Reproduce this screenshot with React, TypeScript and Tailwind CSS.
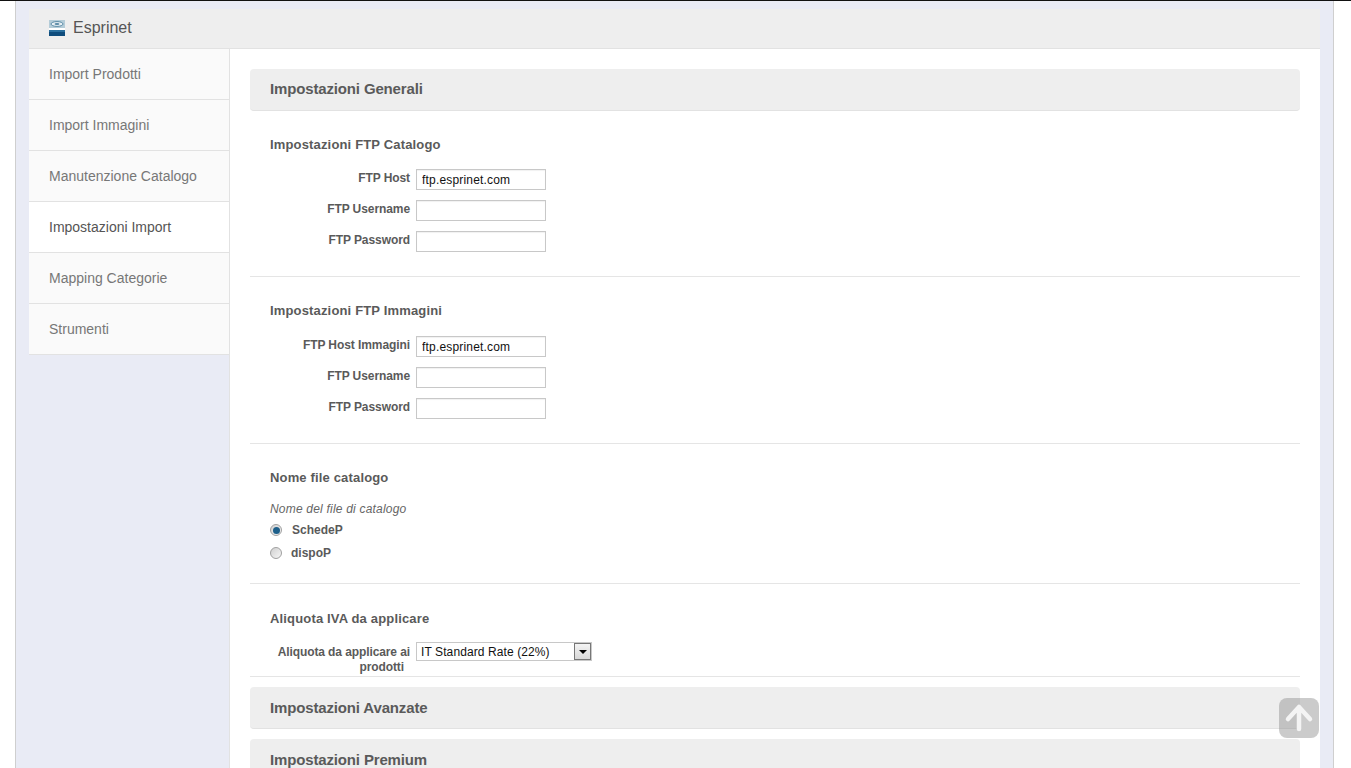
import React from 'react';

const menu = ['Import Prodotti', 'Import Immagini', 'Manutenzione Catalogo', 'Impostazioni Import', 'Mapping Categorie', 'Strumenti'];

const Field = ({ label, value, className = '' }: { label: string; value?: string; className?: string }) => (
  <div className={`flex items-start h-[21px] ${className}`}>
    <label className="w-[160px] pt-[1px] text-right text-[12px] leading-[17px] font-bold tracking-[-0.08px] text-[#5a5a5a]">{label}</label>
    <input
      type="text"
      defaultValue={value}
      className="ml-[6px] w-[130px] h-[21px] bg-white border border-[#c8c8c8] shadow-[inset_0_1px_1px_rgba(0,0,0,0.06)] px-[5px] text-[12px] tracking-[0.18px] text-[#111] outline-none"
    />
  </div>
);

const SectionTitle = ({ children, className = '' }: { children: React.ReactNode; className?: string }) => (
  <h3 className={`pl-[20px] text-[13px] leading-[16px] font-bold tracking-[0.16px] text-[#5a5a5a] ${className}`}>{children}</h3>
);

const PanelHeader = ({ children, className = '' }: { children: React.ReactNode; className?: string }) => (
  <div className={`h-[42px] shrink-0 rounded-[4px] bg-[#eeeeee] border-b border-[#e2e2e2] pl-[20px] flex items-center text-[15px] tracking-[-0.15px] font-bold text-[#5a5a5a] ${className}`}>
    {children}
  </div>
);

const Radio = ({ checked }: { checked?: boolean }) => (
  <span className="w-[12px] h-[12px] rounded-full border border-[#a0a0a0] bg-gradient-to-br from-[#d0d0d0] to-[#f6f6f6] flex items-center justify-center shrink-0">
    {checked && <span className="w-[7px] h-[7px] rounded-full bg-[#1d5f8a]" />}
  </span>
);

const App: React.FC = () => {
  return (
    <div className="h-[768px] w-full overflow-hidden bg-white relative font-['Liberation_Sans',Arial,sans-serif]">
      <div className="h-[1px] bg-[#111]" />
      <div className="ml-[15px] w-[1319px] h-[767px] bg-[#e9ebf5] border-x border-[#cfcfcf] px-[13px] pt-[8px] overflow-hidden">
        <div className="h-[40px] bg-[#eeeeee] border-b border-[#e2e2e2] flex items-center pl-[20px] pb-[2px]">
          <svg width="16" height="16" viewBox="0 0 16 16">
            <rect x="0" y="0" width="16" height="8" fill="#b4ccd8" />
            <ellipse cx="8" cy="4" rx="6" ry="2.4" fill="#e8f0f4" stroke="#5a8aa6" />
            <ellipse cx="8" cy="4" rx="2.5" ry="1" fill="#5a8aa6" />
            <rect x="0" y="8" width="16" height="2" fill="#ffffff" />
            <rect x="0" y="10" width="16" height="2" fill="#2a6f9e" />
            <rect x="0" y="12" width="16" height="4" fill="#0f4c7c" />
          </svg>
          <span className="ml-[8px] text-[16px] text-[#555]">Esprinet</span>
        </div>
        <div className="flex">
          <ul className="w-[200px] shrink-0">
            {menu.map((m) => (
              <li
                key={m}
                className={`h-[51px] border-b border-[#e2e2e2] pl-[20px] pt-[1px] flex items-center text-[14px] ${m === 'Impostazioni Import' ? 'bg-white text-[#555]' : 'bg-[#fafafa] text-[#777]'}`}
              >
                {m}
              </li>
            ))}
          </ul>
          <div className="flex-1 h-[720px] bg-white border-l border-[#e2e2e2] px-[20px] pt-[20px] flex flex-col">
            <PanelHeader>Impostazioni Generali</PanelHeader>

            <SectionTitle className="mt-[26px]">Impostazioni FTP Catalogo</SectionTitle>
            <Field className="mt-[16px]" label="FTP Host" value="ftp.esprinet.com" />
            <Field className="mt-[10px]" label="FTP Username" />
            <Field className="mt-[10px]" label="FTP Password" />
            <hr className="mt-[24px] border-[#e5e5e5]" />

            <SectionTitle className="mt-[26px]">Impostazioni FTP Immagini</SectionTitle>
            <Field className="mt-[17px]" label="FTP Host Immagini" value="ftp.esprinet.com" />
            <Field className="mt-[10px]" label="FTP Username" />
            <Field className="mt-[10px]" label="FTP Password" />
            <hr className="mt-[24px] border-[#e5e5e5]" />

            <SectionTitle className="mt-[26px]">Nome file catalogo</SectionTitle>
            <p className="mt-[15px] pl-[20px] text-[12px] leading-[16px] italic tracking-[0.2px] text-[#666]">Nome del file di catalogo</p>
            <div className="mt-[5px] pl-[20px] h-[16px] flex items-center text-[12px] font-bold text-[#5a5a5a]">
              <Radio checked />
              <span className="ml-[10px]">SchedeP</span>
            </div>
            <div className="mt-[7px] pl-[20px] h-[16px] flex items-center text-[12px] font-bold text-[#5a5a5a]">
              <Radio />
              <span className="ml-[9px]">dispoP</span>
            </div>
            <hr className="mt-[22px] border-[#e5e5e5]" />

            <SectionTitle className="mt-[27px]">Aliquota IVA da applicare</SectionTitle>
            <div className="mt-[15px] flex items-start">
              <label className="w-[160px] pt-[3px] text-right text-[12px] leading-[15px] font-bold tracking-[-0.1px] text-[#5a5a5a]">
                Aliquota da applicare ai
                <span className="block pr-[6px]">prodotti</span>
              </label>
              <div className="ml-[6px] w-[176px] h-[19px] bg-white border border-[#c8c8c8] flex items-center justify-between pl-[4px] text-[12px] tracking-[0.1px] text-[#111]">
                <span>IT Standard Rate (22%)</span>
                <span className="w-[17px] h-[17px] border border-[#777] bg-gradient-to-b from-[#f4f4f4] to-[#d8d8d8] flex items-center justify-center">
                  <span className="w-0 h-0 border-x-[4px] border-x-transparent border-t-[4px] border-t-black" />
                </span>
              </div>
            </div>
            <hr className="mt-[1px] border-[#e5e5e5]" />

            <PanelHeader className="mt-[10px] pt-[1px]">Impostazioni Avanzate</PanelHeader>
            <PanelHeader className="mt-[10px] pt-[1px]">Impostazioni Premium</PanelHeader>
          </div>
        </div>
      </div>
      <div className="absolute left-[1279px] top-[698px] w-[40px] h-[40px] rounded-[8px] bg-[#8c8c8c]/45 flex items-center justify-center">
        <svg width="30" height="30" viewBox="0 0 30 30" fill="none" stroke="#f4f4f4" strokeWidth="4.5" strokeLinecap="round" strokeLinejoin="round">
          <path d="M15 26V4M4 16 15 4l11 12" />
        </svg>
      </div>
    </div>
  );
};

export default App;
